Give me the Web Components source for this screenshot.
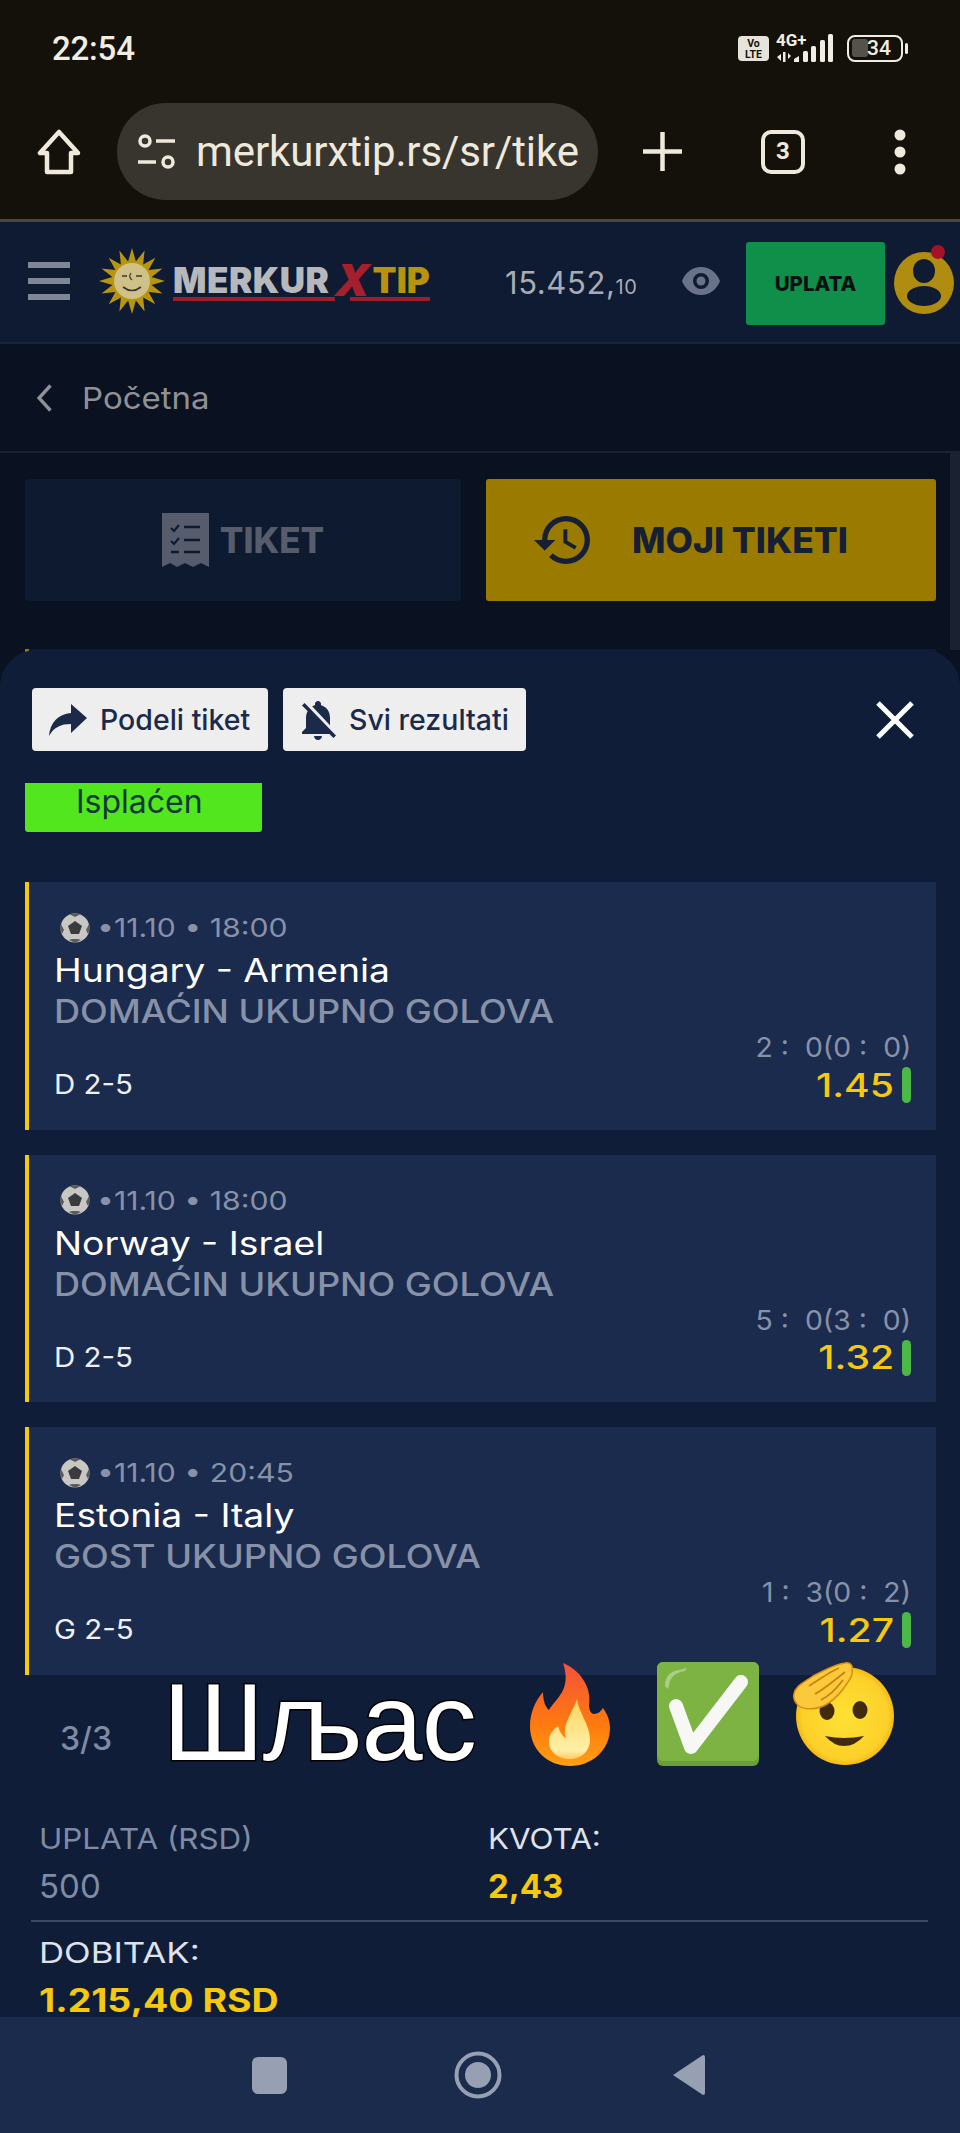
<!DOCTYPE html>
<html lang="sr">
<head>
<meta charset="utf-8">
<title>Merkur Xtip tiket</title>
<style>
html, body { margin: 0; padding: 0; background: #0a1120; }
</style>
</head>
<body>
<app-shell>
  <status-bar></status-bar>
  <browser-bar></browser-bar>
  <site-header></site-header>
  <crumb-bar></crumb-bar>
  <ticket-tabs></ticket-tabs>
  <ticket-sheet>
    <bet-card>
      <span slot="time">•11.10 • 18:00</span>
      <span slot="title">Hungary - Armenia</span>
      <span slot="market">DOMAĆIN UKUPNO GOLOVA</span>
      <span slot="pick">D 2-5</span>
      <span slot="score">2 :&nbsp;&nbsp;0(0 :&nbsp;&nbsp;0)</span>
      <span slot="odd">1.45</span>
    </bet-card>
    <bet-card>
      <span slot="time">•11.10 • 18:00</span>
      <span slot="title">Norway - Israel</span>
      <span slot="market">DOMAĆIN UKUPNO GOLOVA</span>
      <span slot="pick">D 2-5</span>
      <span slot="score">5 :&nbsp;&nbsp;0(3 :&nbsp;&nbsp;0)</span>
      <span slot="odd">1.32</span>
    </bet-card>
    <bet-card>
      <span slot="time">•11.10 • 20:45</span>
      <span slot="title">Estonia - Italy</span>
      <span slot="market">GOST UKUPNO GOLOVA</span>
      <span slot="pick">G 2-5</span>
      <span slot="score">1 :&nbsp;&nbsp;3(0 :&nbsp;&nbsp;2)</span>
      <span slot="odd">1.27</span>
    </bet-card>
    <ticket-summary></ticket-summary>
  </ticket-sheet>
  <nav-bar></nav-bar>
  <story-sticker></story-sticker>
</app-shell>

<script>
// small helper, every element is just a shadow root with fixed markup
function defineEl(name, html) {
  const template = document.createElement('template');
  template.innerHTML = html;
  customElements.define(name, class extends HTMLElement {
    constructor() {
      super();
      this.attachShadow({mode: 'open'});
      this.shadowRoot.append(template.content.cloneNode(true));
    }
  });
}

function sunPoints(cx, cy, outer, inner, count) {
  const pts = [];
  for (let i = 0; i < count * 2; i++) {
    const r = i % 2 ? inner : outer;
    const a = Math.PI * i / count - Math.PI / 2;
    pts.push((cx + r * Math.cos(a)).toFixed(1) + ',' + (cy + r * Math.sin(a)).toFixed(1));
  }
  return pts.join(' ');
}

defineEl('app-shell', `
<style>
:host {
  display: flex;
  flex-direction: column;
  position: relative;
  width: 960px;
  height: 2133px;
  overflow: hidden;
  background: #0a1120;
  font-family: Inter, "Noto Sans", sans-serif;
}
</style>
<slot></slot>
`);

defineEl('status-bar', `
<style>
:host {
  display: flex;
  justify-content: space-between;
  align-items: center;
  box-sizing: border-box;
  height: 96px;
  padding: 0 52px 0 52px;
  background: #14110b;
  color: #f1ede2;
  font-family: Roboto, sans-serif;
}
.time { font-size: 33px; font-weight: 500; letter-spacing: -.2px; }
.icons { display: flex; align-items: center; margin-right: 0; }
.volte {
  box-sizing: border-box;
  width: 31px;
  height: 25px;
  border-radius: 4px;
  background: #e6e3db;
  color: #14110b;
  font-size: 10.5px;
  font-weight: 700;
  line-height: 11px;
  text-align: center;
  padding-top: 2px;
}
.net { width: 58px; height: 36px; margin: -6px 0 0 7px; }
.battery {
  box-sizing: border-box;
  position: relative;
  width: 56px;
  height: 27px;
  margin-left: 13px;
  border: 2.5px solid #f1ede2;
  border-radius: 8px;
  text-align: center;
  font-size: 21px;
  font-weight: 500;
  line-height: 22px;
  padding-left: 8px;
}
.battery::before {
  content: "";
  position: absolute;
  left: 2.5px;
  top: 2.5px;
  bottom: 2.5px;
  width: 16px;
  border-radius: 3px;
  background: #55524b;
  z-index: 0;
}
.battery span { position: relative; }
.cap { width: 3px; height: 11px; margin-left: 2px; background: #f1ede2; border-radius: 2px; }
</style>
<span class="time">22:54</span>
<span class="icons">
  <span class="volte">Vo<br>LTE</span>
  <svg class="net" viewBox="0 -6 58 36">
    <text x="0" y="13" font-family="Roboto, sans-serif" font-size="17" font-weight="700" fill="#f1ede2">4G+</text>
    <path d="M1 24l4-3v7zM7 19h2.500v10H7zM12 20l3 3-3 3z" fill="#f1ede2"/>
    <path d="M18 26l5-3v6h-5z" fill="#f1ede2"/>
    <rect x="27" y="18" width="5" height="11" rx="1.500" fill="#f1ede2"/>
    <rect x="35" y="13" width="5" height="16" rx="1.500" fill="#f1ede2"/>
    <rect x="44" y="7" width="5" height="22" rx="1.500" fill="#f1ede2"/>
    <rect x="52" y="1" width="5" height="28" rx="1.500" fill="#f1ede2"/>
  </svg>
  <span class="battery"><span>34</span></span>
  <span class="cap"></span>
</span>
`);

defineEl('browser-bar', `
<style>
:host {
  display: flex;
  align-items: flex-start;
  box-sizing: border-box;
  height: 126px;
  padding: 7px 0 0 37px;
  background: #14110b;
  border-bottom: 3px solid #4b4638;
  color: #efe9dc;
  font-family: Roboto, sans-serif;
}
svg { display: block; flex: none; }
.home { margin-top: 26px; }
.pill {
  display: flex;
  align-items: center;
  box-sizing: border-box;
  width: 481px;
  height: 97px;
  margin-left: 36px;
  padding-left: 21px;
  border-radius: 49px;
  background: #38342e;
  font-size: 42px;
  white-space: nowrap;
}
.url { margin-left: 21px; letter-spacing: -.1px; }
.plus { margin: 29px 0 0 45px; }
.tabs {
  box-sizing: border-box;
  width: 44px;
  height: 44px;
  margin: 27px 0 0 79px;
  border: 4px solid #efe9dc;
  border-radius: 10px;
  text-align: center;
  font-size: 24px;
  font-weight: 700;
  line-height: 35px;
}
.dots { margin: 26px 0 0 89px; }
</style>
<svg class="home" width="44" height="46" viewBox="0 0 44 46" fill="none" stroke="currentColor" stroke-width="4.5" stroke-linejoin="round">
  <path d="M22 3L3 24h7v19h24V24h7z"/>
</svg>
<span class="pill">
  <svg width="37" height="36" viewBox="0 0 37 36" fill="none" stroke="currentColor" stroke-width="3.5">
    <circle cx="7" cy="7" r="5"/><path d="M18 7h19M0 28h18"/><circle cx="30" cy="28" r="5"/>
  </svg>
  <span class="url">merkurxtip.rs/sr/tike</span>
</span>
<svg class="plus" width="39" height="39" viewBox="0 0 39 39" stroke="currentColor" stroke-width="4.5"><path d="M19.5 0v39M0 19.5h39"/></svg>
<span class="tabs">3</span>
<svg class="dots" width="12" height="46" viewBox="0 0 12 46" fill="currentColor"><circle cx="6" cy="6" r="5.5"/><circle cx="6" cy="23" r="5.5"/><circle cx="6" cy="40" r="5.5"/></svg>
`);

defineEl('site-header', `
<style>
:host {
  display: flex;
  align-items: center;
  box-sizing: border-box;
  height: 122px;
  padding: 0 0 2px 28px;
  background: #0f1a33;
  border-bottom: 2px solid #19253e;
}
svg { display: block; flex: none; }
.burger { display: flex; flex-direction: column; gap: 10px; width: 42px; }
.burger i { display: block; height: 6px; background: #7f8797; }
.sun { margin-left: 29px; }
.brand {
  display: flex;
  flex-direction: column;
  position: relative;
  margin-left: 8px;
  margin-top: 3px;
  width: 258px;
  font-family: Inter, sans-serif;
  font-weight: 900;
  font-size: 35px;
  line-height: 30px;
  white-space: nowrap;
}
.brand .word { color: #b6b8bb; display: flex; letter-spacing: .5px; }
.brand .x { color: #a5202c; font-size: 44px; margin: 0 2px 0 6px; line-height: 30px; transform: skewX(-12deg); }
.brand .tip { color: #b8930f; letter-spacing: 0; }
.brand .rule { display: flex; gap: 15px; margin-top: 2px; }
.brand .rule i { display: block; height: 4px; background: #9e1f2b; }
.balance {
  margin-left: 74px;
  margin-top: 2px;
  width: 177px;
  color: #a8acb4;
  font-family: Inter, sans-serif;
  font-size: 31px;
  letter-spacing: .6px;
}
.balance small { font-size: 20px; }
.pay {
  display: flex;
  align-items: center;
  justify-content: center;
  width: 139px;
  height: 83px;
  margin-left: 26px;
  margin-top: 5px;
  border-radius: 3px;
  background: #0f8f4a;
  color: #0a0f14;
  font-family: Inter, sans-serif;
  font-weight: 800;
  font-size: 20.5px;
}
.avatar { margin-left: 9px; margin-top: -4px; }
</style>
<span class="burger"><i></i><i></i><i></i></span>
<svg class="sun" width="66" height="66" viewBox="0 0 66 66">
  <polygon points="${sunPoints(33, 33, 33, 20, 16)}" fill="#b8950f"/>
  <circle cx="33" cy="33" r="18" fill="#cfc188"/>
  <path d="M23 28h5M37 28h6M24 39q9 7 18 0" fill="none" stroke="#3c3a2c" stroke-width="1.6"/>
  <path d="M32 25q-3 4 1 7" fill="none" stroke="#3c3a2c" stroke-width="1.2"/>
</svg>
<span class="brand">
  <span class="word">MERKUR<span class="x">X</span><span class="tip">TIP</span></span>
  <span class="rule"><i style="width:162px"></i><i style="width:80px"></i></span>
</span>
<span class="balance">15.452,<small>10</small></span>
<svg class="eye" width="38" height="28" viewBox="0 0 38 28">
  <path d="M19 0C10 0 3 6 0 14c3 8 10 14 19 14s16-6 19-14C35 6 28 0 19 0zm0 22a8 8 0 1 1 0-16 8 8 0 0 1 0 16z" fill="#6a7289"/>
  <circle cx="19" cy="14" r="4.5" fill="#6a7289"/>
</svg>
<span class="pay">UPLATA</span>
<svg class="avatar" width="62" height="72" viewBox="0 0 62 72">
  <ellipse cx="30" cy="40" rx="30" ry="31" fill="#b08c10"/>
  <ellipse cx="30" cy="28" rx="11" ry="12" fill="#0f1a33"/>
  <ellipse cx="30" cy="53" rx="17" ry="10" fill="#0f1a33"/>
  <circle cx="44" cy="9" r="7" fill="#a51226"/>
</svg>
`);

defineEl('crumb-bar', `
<style>
:host {
  display: flex;
  align-items: center;
  box-sizing: border-box;
  height: 109px;
  padding-left: 37px;
  background: #0a1120;
  border-bottom: 2px solid #1a2335;
  color: #8f9196;
  font-family: Inter, sans-serif;
  font-size: 30px;
}
span { margin-left: 30px; transform: scaleX(1.1); transform-origin: left; }
</style>
<svg width="15" height="28" viewBox="0 0 15 28" fill="none" stroke="currentColor" stroke-width="3.4"><path d="M13.5 1.5L2 14l11.5 12.5"/></svg>
<span>Početna</span>
`);

defineEl('ticket-tabs', `
<style>
:host {
  display: block;
  position: relative;
  box-sizing: border-box;
  height: 197px;
  padding: 26px 24px 0 25px;
  background: #0a1120;
  font-family: Inter, sans-serif;
  font-weight: 800;
}
.row { display: flex; gap: 25px; }
.tab {
  display: flex;
  align-items: center;
  justify-content: center;
  box-sizing: border-box;
  height: 122px;
  border-radius: 3px;
}
.off { width: 436px; background: #0e1a30; color: #565c6b; font-size: 35px; }
.off svg { margin-right: 11px; }
.on { width: 450px; background: #9a7b00; color: #161f33; font-size: 35.5px; padding-right: 40px; }
.on svg { margin-right: 42px; }
.stub {
  position: absolute;
  left: 25px;
  right: 24px;
  top: 196px;
  height: 40px;
  box-sizing: border-box;
  background: #0e1a30;
  border-left: 4px solid #9a7b00;
}
.scroll {
  position: absolute;
  right: 0;
  top: 0;
  width: 10px;
  height: 197px;
  background: #1a2130;
}
</style>
<div class="row">
  <span class="tab off">
    <svg width="47" height="54" viewBox="0 0 47 54">
      <path d="M0 0h47v54l-8-4-8 4-8-4-8 4-7-4-8 4z" fill="#565c6b"/>
      <path d="M9 15l3 3 5-6M9 28l3 3 5-6" fill="none" stroke="#0e1a30" stroke-width="2"/>
      <path d="M22 14h16M22 27h16M9 39h8M22 39h16" stroke="#0e1a30" stroke-width="2.5"/>
    </svg>
    TIKET
  </span>
  <span class="tab on">
    <svg width="56" height="52" viewBox="1 3 21 18" preserveAspectRatio="xMidYMid meet">
      <path fill="#161f33" d="M13 3a9 9 0 0 0-9 9H1l3.89 3.89.07.14L9 12H6c0-3.87 3.13-7 7-7s7 3.13 7 7-3.13 7-7 7c-1.93 0-3.68-.79-4.94-2.06l-1.42 1.42A8.954 8.954 0 0 0 13 21a9 9 0 0 0 0-18zm-1 5v5l4.28 2.54.72-1.21-3.5-2.08V8H12z"/>
    </svg>
    MOJI TIKETI
  </span>
</div>
<div class="stub"></div>
<div class="scroll"></div>
`);

defineEl('ticket-sheet', `
<style>
:host {
  display: block;
  position: relative;
  flex: 1;
  min-height: 0;
  box-sizing: border-box;
  padding: 38px 24px 0 25px;
  border-radius: 36px 36px 0 0;
  background: #0f1d39;
}
.actions { display: flex; align-items: center; gap: 15px; height: 63px; padding-left: 7px; }
.btn {
  display: flex;
  align-items: center;
  box-sizing: border-box;
  height: 63px;
  padding-left: 17px;
  border-radius: 4px;
  background: #eeeeef;
  color: #1c2a4a;
  font-family: Inter, sans-serif;
  font-weight: 500;
  font-size: 28.5px;
  white-space: nowrap;
}
.btn svg { margin-right: 13px; }
.close { margin-left: auto; margin-right: 22px; }
.status {
  box-sizing: border-box;
  width: 237px;
  height: 49px;
  margin-top: 32px;
  padding-left: 51px;
  border-radius: 0 0 3px 3px;
  background: #52e61e;
  color: #133a3a;
  font-size: 32px;
  line-height: 38px;
}
.list { display: flex; flex-direction: column; gap: 25px; margin-top: 50px; }
</style>
<div class="actions">
  <span class="btn" style="width:236px">
    <svg width="38" height="32" viewBox="0 0 38 32"><path d="M22 0l16 14-16 15v-9C12 20 5 23 0 32c1-13 9-22 22-23z" fill="#1c2a4a"/></svg>
    Podeli tiket
  </span>
  <span class="btn" style="width:243px">
    <svg width="36" height="40" viewBox="3 2 18 20"><path fill="#1c2a4a" d="M20 18.69L7.84 6.14 5.27 3.49 4 4.76l2.8 2.8v.01c-.52.99-.8 2.16-.8 3.42v5l-2 2v1h13.73l2 2L21 19.72l-1-1.03zM12 22c1.11 0 2-.89 2-2h-4c0 1.11.89 2 2 2zm6-7.32V11c0-3.08-1.64-5.64-4.5-6.32V4c0-.83-.67-1.5-1.5-1.5s-1.5.67-1.5 1.5v.68c-.15.03-.29.08-.42.12-.1.03-.2.07-.3.11h-.01c-.2.08-.4.17-.59.27-.01 0-.01 0-.02.01L18 14.68z"/></svg>
    Svi rezultati
  </span>
  <svg class="close" width="38" height="38" viewBox="0 0 38 38" stroke="#fff" stroke-width="5"><path d="M2 2l34 34M36 2L2 36"/></svg>
</div>
<div class="status">Isplaćen</div>
<div class="list"><slot></slot></div>
`);

// the reference text runs wider than any installed font, so lines get a horizontal stretch
defineEl('bet-card', `
<style>
:host {
  display: block;
  box-sizing: border-box;
  height: 247.5px;
  padding: 26px 25px 0 25px;
  background: #1b2b4d;
  border-left: 4px solid #f6c90e;
  color: #fff;
}
.wide { display: inline-block; transform-origin: left center; white-space: nowrap; }
.wide.end { transform-origin: right center; }
.time { display: flex; align-items: center; height: 39px; color: #8792a8; font-size: 26px; padding-left: 6px; }
.time svg { margin-right: 7px; }
.title { font-size: 32px; line-height: 46px; height: 46px; margin-top: 1px; }
.title .wide { transform: scaleX(1.165); }
.market { color: #8792a8; font-size: 32px; font-weight: 500; line-height: 36px; height: 36px; }
.market .wide { transform: scaleX(1.13); }
.time .wide { transform: scaleX(1.16); }
.foot { display: flex; justify-content: space-between; align-items: flex-end; }
.pick { color: #eef0f4; font-size: 27px; line-height: 38px; }
.pick .wide { transform: scaleX(1.09); }
.right { text-align: right; }
.score { color: #8792a8; font-size: 27px; line-height: 36px; }
.score .wide { transform: scaleX(1.05); }
.odd { display: flex; justify-content: flex-end; align-items: center; height: 38px; color: #f6c90e; font-size: 32px; font-weight: 500; }
.odd .wide { transform: scaleX(1.22); }
.odd i { display: block; width: 9px; height: 36px; margin-left: 8px; border-radius: 5px; background: #4cb848; }
</style>
<div class="time">
  <svg width="30" height="30" viewBox="0 0 30 30">
    <circle cx="15" cy="15" r="14.5" fill="#c9c7c3"/>
    <path d="M15 8l7 5-3 8h-8l-3-8z" fill="#3b3b3d"/>
    <path d="M10 1.5l5 2.500 5-2.500-1-1h-8zM1 11l3 6-2 4-2-6zM29 11l-3 6 2 4 2-6zM9 27l3-1h6l3 1-6 3z" fill="#5c5b5c"/>
  </svg>
  <span class="wide"><slot name="time"></slot></span>
</div>
<div class="title"><span class="wide"><slot name="title"></slot></span></div>
<div class="market"><span class="wide"><slot name="market"></slot></span></div>
<div class="foot">
  <div class="pick"><span class="wide"><slot name="pick"></slot></span></div>
  <div class="right">
    <div class="score"><span class="wide end"><slot name="score"></slot></span></div>
    <div class="odd"><span class="wide end"><slot name="odd"></slot></span><i></i></div>
  </div>
</div>
`);

defineEl('ticket-summary', `
<style>
:host {
  display: block;
  padding-top: 20.5px;
  color: #7f8ba3;
  font-size: 29px;
  line-height: 40px;
}
.count { height: 38px; line-height: 38px; padding-left: 35px; font-size: 32px; font-weight: 500; }
.grid {
  display: grid;
  grid-template-columns: 449px 1fr;
  row-gap: 7px;
  margin-top: 61px;
  padding-left: 14px;
}
.grid span { display: block; transform: scaleX(1.08); transform-origin: left; white-space: nowrap; }
.grid .big { font-size: 33px; transform: none; }
.light { color: #dfe2e8; }
.gold { color: #f6c90e; font-weight: 700; }
hr {
  height: 2px;
  margin: 14px 8px 11px 6px;
  border: 0;
  background: #3b4a6a;
}
.win { padding-left: 14px; }
.win div { transform: scaleX(1.2); transform-origin: left; white-space: nowrap; }
.win div + div { margin-top: 12px; font-size: 32px; line-height: 32px; transform: scaleX(1.17); }
</style>
<div class="count">3/3</div>
<div class="grid">
  <span>UPLATA (RSD)</span><span class="light">KVOTA:</span>
  <span class="big">500</span><span class="gold big">2,43</span>
</div>
<hr>
<div class="win">
  <div class="light">DOBITAK:</div>
  <div class="gold">1.215,40 RSD</div>
</div>
`);

defineEl('nav-bar', `
<style>
:host {
  display: flex;
  align-items: center;
  flex: none;
  box-sizing: border-box;
  height: 116px;
  padding-left: 252px;
  background: #1b2b4c;
  position: relative;
}
svg { display: block; flex: none; }
</style>
<svg width="35" height="37" viewBox="0 0 35 37"><rect width="35" height="37" rx="6" fill="#97a0b3"/></svg>
<svg width="48" height="48" viewBox="0 0 48 48" style="margin-left:167px"><circle cx="24" cy="24" r="21.500" fill="none" stroke="#97a0b3" stroke-width="4"/><circle cx="24" cy="24" r="13" fill="#97a0b3"/></svg>
<svg width="33" height="42" viewBox="0 0 33 42" style="margin-left:170px"><path d="M31 1L1 21l30 20q2 0 2-2V3q0-2-2-2z" fill="#97a0b3"/></svg>
`);

// the story caption lies over the ticket, so it gets a free position
defineEl('story-sticker', `
<style>
:host {
  display: flex;
  align-items: flex-start;
  position: absolute;
  left: 163px;
  top: 1662px;
  height: 104px;
}
.caption {
  color: #fff;
  font-family: "Liberation Sans", sans-serif;
  font-size: 110px;
  line-height: 104px;
  letter-spacing: -1px;
  margin-top: 8px;
  -webkit-text-stroke: 3px #000;
  paint-order: stroke fill;
  white-space: nowrap;
}
svg { display: block; flex: none; }
</style>
<span class="caption">Шљас</span>
<svg width="82" height="104" viewBox="0 0 82 104" style="margin-left:54px">
  <defs>
    <linearGradient id="f1" x1="0" y1="0" x2="0" y2="1"><stop offset="0" stop-color="#f4513a"/><stop offset=".6" stop-color="#ff7a0f"/><stop offset="1" stop-color="#ff9f14"/></linearGradient>
    <linearGradient id="f2" x1="0" y1="0" x2="0" y2="1"><stop offset="0" stop-color="#fdd35c"/><stop offset=".85" stop-color="#fff0a8"/><stop offset="1" stop-color="#ffc966"/></linearGradient>
  </defs>
  <path d="M33 1C50 8 62 25 59 43C59 48 61 52 64 52C68 52 71 49 73 46C77 52 80 58 80 66C80 88 62 104 40 104C18 104 0 88 0 64C0 50 6 38 13 30C13 38 15 45 19 48C26 36 42 28 33 1Z" fill="url(#f1)"/>
  <path d="M47 37C49 52 60 62 60 78C60 90 50 97 40 97C28 97 19 90 19 80C19 72 23 68 28 64C30 70 32 74 36 76C32 62 42 52 47 37Z" fill="url(#f2)"/>
</svg>
<svg width="102" height="104" viewBox="0 0 102 104" style="margin-left:45px">
  <rect width="102" height="104" rx="6" fill="#689f38"/>
  <rect width="102" height="99" rx="6" fill="#7cb342"/>
  <path d="M8 24q0-14 14-16l8-2-2 3q-14 2-16 14l-1 4z" fill="#a9cf84"/>
  <path d="M19 44l15 41 50-65" fill="none" stroke="#f7f7f5" stroke-width="14" stroke-linecap="round" stroke-linejoin="round"/>
</svg>
<svg width="102" height="104" viewBox="0 0 102 104" style="margin-left:34px">
  <defs>
    <radialGradient id="fc" cx=".5" cy=".5" r=".55"><stop offset="0" stop-color="#fee133"/><stop offset=".8" stop-color="#fcd02a"/><stop offset="1" stop-color="#eda600"/></radialGradient>
  </defs>
  <circle cx="52" cy="54" r="49" fill="url(#fc)"/>
  <ellipse cx="34" cy="49" rx="7.500" ry="9" fill="#422b0d"/>
  <ellipse cx="67" cy="48" rx="7.500" ry="9" fill="#422b0d"/>
  <path d="M32 74Q51 78 71 74Q62 84 51 84Q41 84 32 74Z" fill="#422b0d"/>
  <path d="M1 32C2 24 12 20 20 14C30 9 42 2 52 1C58 0 60 4 59 8C60 12 58 16 55 20C50 28 44 36 34 42C24 48 12 48 6 44C2 41 0 36 1 32Z" fill="#fbc93a" stroke="#d98e10" stroke-width="1.500"/>
  <path d="M16 24C26 18 36 10 46 6M22 32C30 28 42 18 52 10M28 38C36 34 44 26 50 18" fill="none" stroke="#c9830f" stroke-width="1.800"/>
</svg>
`);
</script>
</body>
</html>
